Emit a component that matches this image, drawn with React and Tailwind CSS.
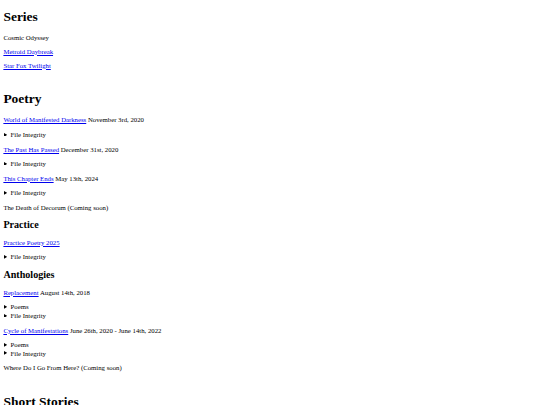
import React from 'react';

// Plain document page, laid out at 1280px and zoomed down to the 540px window.
const linkCls = 'text-[#0000ee] underline';
const pCls = 'my-[16px]';
const h1Cls = 'text-[32px] leading-[normal] font-bold my-[21.44px]';
const h2Cls = 'text-[24px] leading-[normal] font-bold my-[19.92px]';

function Entry({ title, href = '#', date }) {
  return (
    <p className={pCls}>
      <a href={href} className={linkCls}>
        {title}
      </a>
      {date ? ` ${date}` : null}
    </p>
  );
}

function Fold({ label }) {
  return (
    <details className="block">
      <summary className="flex items-center h-[20.5px] cursor-pointer list-none [&::-webkit-details-marker]:hidden">
        <span className="w-[17px] shrink-0 flex items-center">
          <svg viewBox="0 0 8 9" className="w-[8px] h-[9px] ml-[1px]" aria-hidden="true">
            <path d="M0 0L8 4.5L0 9Z" fill="currentColor" />
          </svg>
        </span>
        <span>{label}</span>
      </summary>
    </details>
  );
}

export default function App() {
  return (
    <div className="bg-white text-black min-h-screen overflow-hidden">
      <div className="[zoom:0.421875] m-[8px] text-[16px] leading-[normal] font-['Liberation_Serif','Times_New_Roman',serif]">
        <h1 className={h1Cls}>Series</h1>
        <p className={pCls}>Cosmic Odyssey</p>
        <Entry title="Metroid Daybreak" />
        <Entry title="Star Fox Twilight" />
        <br />

        <h1 className={h1Cls}>Poetry</h1>
        <Entry title="World of Manifested Darkness" date="November 3rd, 2020" />
        <Fold label="File Integrity" />
        <Entry title="The Past Has Passed" date="December 31st, 2020" />
        <Fold label="File Integrity" />
        <Entry title="This Chapter Ends" date="May 13th, 2024" />
        <Fold label="File Integrity" />
        <p className={pCls}>The Death of Decorum (Coming soon)</p>

        <h2 className={h2Cls}>Practice</h2>
        <Entry title="Practice Poetry 2025" />
        <Fold label="File Integrity" />

        <h2 className={h2Cls}>Anthologies</h2>
        <Entry title="Replacement" date="August 14th, 2018" />
        <Fold label="Poems" />
        <Fold label="File Integrity" />
        <Entry title="Cycle of Manifestations" date="June 26th, 2020 - June 14th, 2022" />
        <Fold label="Poems" />
        <Fold label="File Integrity" />
        <p className={pCls}>Where Do I Go From Here? (Coming soon)</p>
        <br />

        <h1 className={h1Cls}>Short Stories</h1>
        <Entry title="The Last Light" date="March 2nd, 2021" />
        <Fold label="File Integrity" />
      </div>
    </div>
  );
}
